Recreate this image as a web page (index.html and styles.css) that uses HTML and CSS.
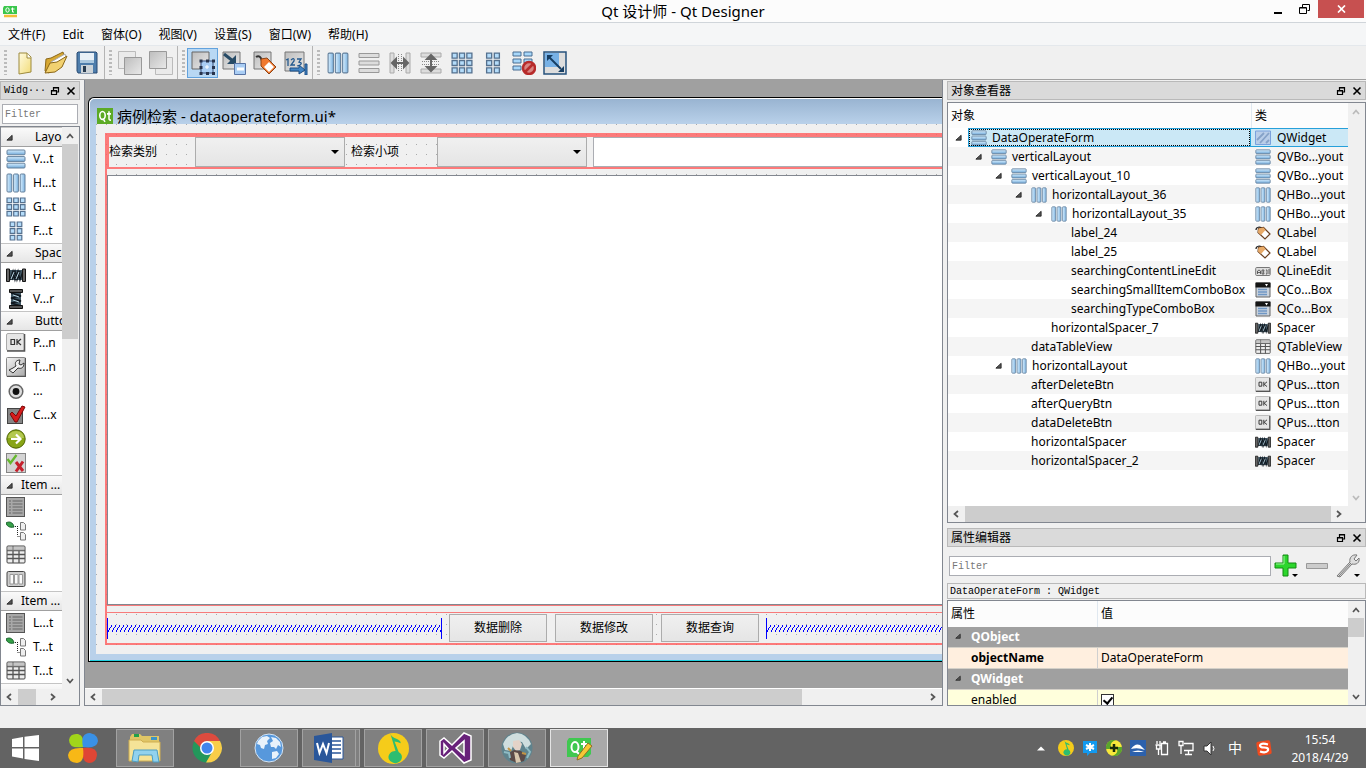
FILE: index.html
```html
<!DOCTYPE html>
<html lang="zh-CN">
<head>
<meta charset="utf-8">
<title>Qt 设计师 - Qt Designer</title>
<link rel="stylesheet" href="styles.css">
</head>
<body>
<svg class="defs" width="0" height="0" aria-hidden="true">
<defs>
<linearGradient id="gb" x1="0" y1="0" x2="0" y2="1"><stop offset="0" stop-color="#d8efff"/><stop offset="1" stop-color="#6fa8d8"/></linearGradient>
<linearGradient id="gh" x1="0" y1="0" x2="1" y2="0"><stop offset="0" stop-color="#d8efff"/><stop offset="1" stop-color="#7fb4e0"/></linearGradient>
<linearGradient id="gg" x1="0" y1="0" x2="1" y2="1"><stop offset="0" stop-color="#f4f4f4"/><stop offset="1" stop-color="#a8a8a8"/></linearGradient>
<linearGradient id="gd" x1="0" y1="0" x2="1" y2="1"><stop offset="0" stop-color="#bdbdbd"/><stop offset="1" stop-color="#e9e9e9"/></linearGradient>
<linearGradient id="gy" x1="0" y1="0" x2="1" y2="1"><stop offset="0" stop-color="#fffbe0"/><stop offset="1" stop-color="#f2dc78"/></linearGradient>
<symbol id="i-v" viewBox="0 0 20 20"><g fill="url(#gb)" stroke="#64809c"><rect x="1" y="1" width="18" height="4.800" rx="1"/><rect x="1" y="7.600" width="18" height="4.800" rx="1"/><rect x="1" y="14.200" width="18" height="4.800" rx="1"/></g></symbol>
<symbol id="i-h" viewBox="0 0 20 20"><g fill="url(#gh)" stroke="#64809c"><rect x="1" y="1" width="4.800" height="18" rx="1"/><rect x="7.600" y="1" width="4.800" height="18" rx="1"/><rect x="14.200" y="1" width="4.800" height="18" rx="1"/></g></symbol>
<symbol id="i-g" viewBox="0 0 20 20"><g fill="#b4dcfa" stroke="#55718f" stroke-width="1.200"><path d="M1 1h4.600v4.600h-4.600zM7.700 1h4.600v4.600h-4.600zM14.400 1h4.600v4.600h-4.600zM1 7.700h4.600v4.600h-4.600zM7.700 7.700h4.600v4.600h-4.600zM14.400 7.700h4.600v4.600h-4.600zM1 14.400h4.600v4.600h-4.600zM7.700 14.400h4.600v4.600h-4.600zM14.400 14.400h4.600v4.600h-4.600z"/></g></symbol>
<symbol id="i-f" viewBox="0 0 20 20"><path fill="#b4dcfa" stroke="#55718f" stroke-width="1.200" d="M4.200 1h4.600v4.600h-4.600zM11.200 1h4.600v4.600h-4.600zM4.200 7.700h4.600v4.600h-4.600zM11.200 7.700h4.600v4.600h-4.600zM4.200 14.400h4.600v4.600h-4.600zM11.200 14.400h4.600v4.600h-4.600z"/></symbol>
<symbol id="i-hs" viewBox="0 0 20 20"><path d="M4 5h12v10h-12z" fill="#3f5663"/><path d="M4 15l3-9 2 9 3-9 2 9 3-9M6 15l3-9 2 9 3-9" fill="none" stroke="#101820" stroke-width="1.300"/><path d="M5 14l3-7M10 14l3-7" stroke="#b7d4e2"/><path d="M.5 4h3v12.500h-3zM16.500 4h3v12.500h-3z" fill="#666" stroke="#151515"/></symbol>
<symbol id="i-vs" viewBox="0 0 20 20"><path d="M5 4h10v12h-10z" fill="#3f5663"/><path d="M5 4l10 3-10 2 10 3-10 2 10 3" fill="none" stroke="#101820" stroke-width="1.500"/><path d="M7 6l6 2M7 11l6 2" stroke="#b7d4e2"/><path d="M3.500 .5h13v3h-13zM3.500 16.500h13v3h-13z" fill="#555" stroke="#111"/></symbol>
<symbol id="i-ok" viewBox="0 0 20 20"><rect x=".5" y=".5" width="18" height="17" rx="1.500" fill="#e6e6e6" stroke="#aaa"/><path d="M1 18h17.500v-17" fill="none" stroke="#555" stroke-width="1.600"/><path d="M5 6.500h3.500v5h-3.500zM11 6v6M15 6l-3.500 3 3.500 3" fill="none" stroke="#333" stroke-width="1.200"/></symbol>
<symbol id="i-tool" viewBox="0 0 20 20"><rect x=".5" y=".5" width="19" height="19" rx="1" fill="url(#gg)" stroke="#888"/><path d="M1 19.500h18.500v-18.500" fill="none" stroke="#555" stroke-width="1.500"/><path d="M3 13l4-2 3-2c-2-4 1-6 4-6l-1 4 2 1 3-2c0 5-3 6-6 5l-5 5z" fill="#f0f0f0" stroke="#333"/></symbol>
<symbol id="i-radio" viewBox="0 0 20 20"><circle cx="10" cy="10.500" r="6.800" fill="#ddd" stroke="#666" stroke-width="1.500"/><circle cx="10" cy="10.500" r="3.400" fill="#111"/></symbol>
<symbol id="i-check" viewBox="0 0 20 20"><rect x="1.500" y="3.500" width="15" height="15" fill="#858585" stroke="#444"/><path d="M4 9l2-2 4 4 6-10 3 1-8 15-2 0z" fill="#d61c1c" stroke="#7b0808"/></symbol>
<symbol id="i-cmd" viewBox="0 0 20 20"><circle cx="10" cy="10" r="9.200" fill="#88a516" stroke="#4d6303"/><path d="M2 9a8 7 0 0 1 16 0z" fill="#b3c850"/><path d="M5 10h9M10 5.500l4.500 4.500-4.500 4.500" fill="none" stroke="#fff" stroke-width="2.200"/></symbol>
<symbol id="i-dlg" viewBox="0 0 20 20"><rect x=".5" y=".5" width="19" height="19" fill="#d4d4d4" stroke="#858585"/><path d="M1.500 6l3 4 6-8" fill="none" stroke="#65b82e" stroke-width="2.300"/><path d="M10 9l7 9M17 8.500l-7 10" stroke="#c51f2c" stroke-width="3"/></symbol>
<symbol id="i-list" viewBox="0 0 20 20"><rect x=".5" y=".5" width="18" height="19" fill="#a8a8a8" stroke="#555"/><path d="M3 4h2M3 7h2M3 10h2M3 13h2M3 16h2M6.500 4h10M6.500 7h10M6.500 10h10M6.500 13h10M6.500 16h10" stroke="#666"/></symbol>
<symbol id="i-tree" viewBox="0 0 20 20"><path d="M0 2c3-2 7-1 8 4-5 1-7-1-8-4z" fill="#36a148" stroke="#17602c"/><path d="M9 5.500h4M11.500 7v8M11.500 15.500h3" fill="none" stroke="#222" stroke-dasharray="1 1"/><path d="M14.500 1.500h3l2 2v5.500h-5zM14.500 11.500h3l2 2v5.500h-5z" fill="#eee" stroke="#777"/></symbol>
<symbol id="i-table" viewBox="0 0 20 20"><rect x="1" y="1" width="18" height="17" rx="1" fill="#eee" stroke="#444"/><path d="M1 5.500h18M1 9.500h18M1 13.500h18M7 1v17M13 5.500v12.500" stroke="#555" stroke-width="1.300"/><path d="M1.500 1.500h17v4h-17z" fill="#aaa" opacity=".6"/></symbol>
<symbol id="i-col" viewBox="0 0 20 20"><rect x="1" y="2.500" width="18" height="15" rx="1.500" fill="#ccc" stroke="#444"/><path d="M4 5.500h3.500v9.500h-3.500zM8.500 5.500h3.500v9.500h-3.500zM13 5.500h3.500v9.500h-3.500z" fill="#fafafa" stroke="#999"/></symbol>
<symbol id="i-label" viewBox="0 0 16 16"><path d="M1 5c0-3 4-4 7-1" fill="none" stroke="#222" stroke-width="1.200"/><path d="M3.500 3.500l5-1 6.500 6.500-5 5-7-6.500z" fill="#fff" stroke="#6b4020" stroke-width="1.200"/><path d="M3.500 3.500l5-1 2 2.500-4.500 5-3-2.500z" fill="#e8aa68"/></symbol>
<symbol id="i-line" viewBox="0 0 16 16"><rect x=".7" y="4.500" width="14.500" height="8" rx="1" fill="#ddd" stroke="#777"/><path d="M2.500 11v-3l1.500-1 1.500 1v3M2.500 9.500h3M7 7h2l-.5 2 .5 2h-2zM11 7h1v4h-1M14 6v5" fill="none" stroke="#444" stroke-width=".8"/></symbol>
<symbol id="i-combo" viewBox="0 0 16 16"><path d="M1 1h14v14h-14z" fill="#c9d2dc" stroke="#666"/><path d="M.5 .5h15v5h-15z" fill="#151515"/><path d="M10 2h3l-1.500 2.500z" fill="#fff"/><path d="M3 7.500h9M3 10h9M3 12.500h9" stroke="#6f97c5" stroke-width="1.700"/></symbol>
<symbol id="i-widget" viewBox="0 0 16 16"><path d="M.5 1h15v13.500h-15z" fill="#b9cde8" stroke="#7ba1dc"/><path d="M2 10l7-7M5 13l9-10M11 13l3-3" stroke="#86a2c8" stroke-width="1.800"/></symbol>
<symbol id="i-exp" viewBox="0 0 8 8"><path d="M1 7l6-5.500v5.500z" fill="#555" stroke="#222"/></symbol>
<symbol id="i-up" viewBox="0 0 8 8"><path d="M1 6l3-3.500 3 3.500" fill="none" stroke="currentColor" stroke-width="1.700"/></symbol>
<symbol id="i-dn" viewBox="0 0 8 8"><path d="M1 2l3 3.500 3-3.500" fill="none" stroke="currentColor" stroke-width="1.700"/></symbol>
<symbol id="i-lt" viewBox="0 0 8 8"><path d="M6 1l-3.500 3 3.500 3" fill="none" stroke="currentColor" stroke-width="1.700"/></symbol>
<symbol id="i-rt" viewBox="0 0 8 8"><path d="M2 1l3.500 3-3.500 3" fill="none" stroke="currentColor" stroke-width="1.700"/></symbol>
<symbol id="i-float" viewBox="0 0 10 10"><path d="M3.500 4v-2.500h5v4.500h-2M3 2h6M1.500 4.500h5v4h-5zM1 5h6" fill="none" stroke="#000" stroke-width="1.200"/></symbol>
<symbol id="i-x" viewBox="0 0 10 10"><path d="M1.500 1.500l7 7M8.500 1.500l-7 7" stroke="#000" stroke-width="1.600"/></symbol>
<symbol id="i-drop" viewBox="0 0 8 4"><path d="M0 0h8l-4 4z" fill="#000"/></symbol>
<symbol id="i-qt" viewBox="0 0 16 15" preserveAspectRatio="none"><path d="M0 0h16v15h-16z" fill="#5caa25"/><ellipse cx="5.500" cy="7" rx="2.700" ry="3.700" fill="none" stroke="#fff" stroke-width="1.600"/><path d="M6 10l2 3M12 3v7q0 1.500 2 1.300M10 5.500h4" fill="none" stroke="#fff" stroke-width="1.500"/></symbol>
<symbol id="i-music" viewBox="0 0 30 36" preserveAspectRatio="none"><ellipse cx="15" cy="18" rx="15" ry="18" fill="#f5cc1a"/><path d="M12 1c2 7 10 5 10 11-3-1-4-2-6-2l4 12a6.500 7 0 1 1-3-1z" fill="#2dbd70"/></symbol>
</defs>
</svg>

<header class="titlebar">
  <svg class="app-icon" viewBox="0 0 16 14"><path d="M2 1h13v8h-14v-6z" fill="#3ac64c"/><ellipse cx="5.500" cy="5" rx="1.700" ry="2.200" fill="none" stroke="#fff"/><path d="M10.500 2.500v4.500h1.500M9 4h3.500" fill="none" stroke="#fff"/><path d="M2 11h13" stroke="#f3bd38" stroke-width="2.500"/></svg>
  <h1 class="app-title">Qt 设计师 - Qt Designer</h1>
  <div class="win-controls">
    <button class="win-btn" aria-label="最小化"><svg width="10" height="12"><path d="M1 10h8" stroke="#000" stroke-width="2"/></svg></button>
    <button class="win-btn" aria-label="还原"><svg width="11" height="10"><path d="M3.500 3v-2.500h7v6h-2M.5 3.500h7v6h-7zM1 4h6" fill="none" stroke="#000"/></svg></button>
    <button class="win-btn close" aria-label="关闭"><svg width="9" height="8"><path d="M1 .5l7 7M8 .5l-7 7" stroke="#fff" stroke-width="1.700"/></svg></button>
  </div>
</header>

<nav class="menubar"><button>文件(F)</button><button>Edit</button><button>窗体(O)</button><button>视图(V)</button><button>设置(S)</button><button>窗口(W)</button><button>帮助(H)</button></nav>

<div class="toolbar">
  <div class="tool-group">
    <button aria-label="新建"><svg viewBox="0 0 24 24"><path d="M6 2h8l4 4v15l-12 2z" fill="url(#gy)" stroke="#9d8a3d"/><path d="M14 2v5h4" fill="#fff" stroke="#9d8a3d"/></svg></button>
    <button aria-label="打开"><svg viewBox="0 0 24 24"><path d="M1 20l1-12 5-1 2-1 10-5 1 4-2 5-13 12z" fill="#d7a833" stroke="#8b6718"/><path d="M7 11l14-8 1 4-5 9-9 4z" fill="#fff" stroke="#aaa"/><path d="M1 22l5-10 7-1 10-6-5 11-7 5z" fill="#f2d170" stroke="#8b6718"/></svg></button>
    <button aria-label="保存"><svg viewBox="0 0 24 24"><path d="M3 1h18l1 1v20h-19l-1-2v-18z" fill="#4e7dab" stroke="#284b73"/><path d="M5 2h14v10h-14z" fill="#e8f0f7"/><path d="M5 9h14v3h-14z" fill="#abc8df"/><path d="M6 14h12v8h-12z" fill="#ccd3d8"/><path d="M8 15h3v6h-3z" fill="#273b50"/></svg></button>
  </div>
  <div class="tool-group">
    <button aria-label="置后"><svg viewBox="0 0 24 24"><path d="M.5 .5h17v17h-17z" fill="#eaeaea" stroke="#bbb"/><path d="M6.500 6.500h17v17h-17z" fill="url(#gd)" stroke="#999"/></svg></button>
    <button aria-label="置前"><svg viewBox="0 0 24 24"><path d="M6.500 6.500h17v17h-17z" fill="#eaeaea" stroke="#bbb"/><path d="M.5 .5h17v17h-17z" fill="url(#gd)" stroke="#999"/></svg></button>
  </div>
  <div class="tool-group">
    <button class="on" aria-label="编辑窗口部件"><svg viewBox="0 0 24 24"><path d="M1 1h17v17h-17z" fill="url(#gd)" stroke="#666"/><path d="M10 10h12v12h-12z" fill="#a9cdf4" stroke="#354c79"/><path d="M8.500 8.500h3v3h-3zM15 8.500h3v3h-3zM21 8.500h3v3h-3zM8.500 15h3v3h-3zM21 15h3v3h-3zM8.500 21h3v3h-3zM15 21h3v3h-3zM21 21h3v3h-3z" fill="#27334c"/><path d="M14 16h4M16 14v4" stroke="#fff"/></svg></button>
    <button aria-label="编辑信号/槽"><svg viewBox="0 0 24 24"><path d="M1 1h17v17h-17z" fill="url(#gd)" stroke="#777"/><path d="M2 3l9 7" stroke="#274b66" stroke-width="3"/><path d="M14 4v9h-9z" fill="#274b66"/><path d="M12.500 12.500h11v11h-11z" fill="#a9cdf4" stroke="#5874a5"/><path d="M15 18h7" stroke="#fff" stroke-width="3"/></svg></button>
    <button aria-label="编辑伙伴"><svg viewBox="0 0 24 24"><path d="M1 1h17v17h-17z" fill="url(#gd)" stroke="#777"/><path d="M3 6c3-2 5 0 6 4" fill="none" stroke="#333" stroke-width="2"/><path d="M8 8l6-1 9 9-7 7-8-8z" fill="#ef7930" stroke="#8c4416"/><path d="M16 11l5 5-5 5-5-5z" fill="#fff"/></svg></button>
    <button aria-label="编辑Tab顺序"><svg viewBox="0 0 24 24"><path d="M1 1h19v19h-19z" fill="url(#gd)" stroke="#777"/><path d="M2 9l2-1v7M7 9q4-3 3 1l-3 4h4M13 8h4l-2 3q4 1 1 3l-3 1" fill="none" stroke="#24598e" stroke-width="1.300"/><path d="M6 17h9v-3l6 5-6 4v-3h-9zM21 13h2v11h-2z" fill="#4385c4" stroke="#1c4f86"/></svg></button>
  </div>
  <div class="tool-group">
    <button aria-label="水平布局"><svg class="s22"><use href="#i-h"/></svg></button>
    <button aria-label="垂直布局"><svg viewBox="0 0 24 24"><path d="M2 2.500h20v4h-20zM2 10h20v4h-20zM2 17.500h20v4h-20z" fill="#ddd" stroke="#999"/></svg></button>
    <button aria-label="水平分裂"><svg viewBox="0 0 24 24"><path d="M2 2h4v20h-4zM18 2h4v20h-4z" fill="#ddd" stroke="#aaa"/><path d="M10.500 3v18M13.500 3v18" stroke="#888" stroke-dasharray="1 1"/><path d="M6 12h12M4 12l4-4v8zM20 12l-4-4v8z" fill="#666" stroke="#666" stroke-width="2"/></svg></button>
    <button aria-label="垂直分裂"><svg viewBox="0 0 24 24"><path d="M2 2h20v4h-20zM2 18h20v4h-20z" fill="#ddd" stroke="#aaa"/><path d="M3 10.500h18M3 13.500h18" stroke="#888" stroke-dasharray="1 1"/><path d="M12 6v12M12 4l4 4h-8zM12 20l4-4h-8z" fill="#666" stroke="#666" stroke-width="2"/></svg></button>
    <button aria-label="栅格布局"><svg class="s22"><use href="#i-g"/></svg></button>
    <button aria-label="表单布局"><svg class="s22"><use href="#i-f"/></svg></button>
    <button aria-label="打破布局"><svg viewBox="0 0 24 24"><path d="M1 1h8v4h-8zM12 1h8v4h-8zM1 8h8v4h-8zM12 8h8v4h-8zM1 15h8v4h-8z" fill="#a7d7fa" stroke="#496d91"/><circle cx="17" cy="17" r="6" fill="#d98583" stroke="#b72b2b" stroke-width="2.500"/><path d="M13 21l8-8" stroke="#b72b2b" stroke-width="2.500"/></svg></button>
    <button aria-label="调整大小"><svg viewBox="0 0 24 24"><path d="M1 1h22v22h-22z" fill="#ddd" stroke="#26517c" stroke-width="1.500"/><path d="M2 2h14v14h-14z" fill="#77b1e6"/><path d="M6 6l12 12" stroke="#173e63" stroke-width="2"/><path d="M4 4h6l-6 6zM21 21h-6l6-6z" fill="#173e63"/></svg></button>
  </div>
</div>

<main class="workspace">
  <aside class="dock dock-left">
    <div class="dock-title mono"><span>Widg···</span><button aria-label="浮动"><svg><use href="#i-float"/></svg></button><button aria-label="关闭"><svg><use href="#i-x"/></svg></button></div>
    <input class="filter mono" type="text" placeholder="Filter" aria-label="Widget filter">
    <div class="frame palette">
      <div class="palette-list">
        <h2 class="far"><svg><use href="#i-exp"/></svg>Layouts</h2>
        <ul><li><svg><use href="#i-v"/></svg>V...t</li><li><svg><use href="#i-h"/></svg>H...t</li><li><svg><use href="#i-g"/></svg>G...t</li><li><svg><use href="#i-f"/></svg>F...t</li></ul>
        <h2 class="far"><svg><use href="#i-exp"/></svg>Spacers</h2>
        <ul><li><svg><use href="#i-hs"/></svg>H...r</li><li><svg><use href="#i-vs"/></svg>V...r</li></ul>
        <h2 class="far"><svg><use href="#i-exp"/></svg>Buttons</h2>
        <ul><li><svg><use href="#i-ok"/></svg>P...n</li><li><svg><use href="#i-tool"/></svg>T...n</li><li><svg><use href="#i-radio"/></svg>...</li><li><svg><use href="#i-check"/></svg>C...x</li><li><svg><use href="#i-cmd"/></svg>...</li><li><svg><use href="#i-dlg"/></svg>...</li></ul>
        <h2><svg><use href="#i-exp"/></svg>Item ...</h2>
        <ul><li><svg><use href="#i-list"/></svg>...</li><li><svg><use href="#i-tree"/></svg>...</li><li><svg><use href="#i-table"/></svg>...</li><li><svg><use href="#i-col"/></svg>...</li></ul>
        <h2><svg><use href="#i-exp"/></svg>Item ...</h2>
        <ul><li><svg><use href="#i-list"/></svg>L...t</li><li><svg><use href="#i-tree"/></svg>T...t</li><li><svg><use href="#i-table"/></svg>T...t</li></ul>
        <h2></h2>
      </div>
      <div class="vbar"><svg><use href="#i-up"/></svg><div class="track"><div class="thumb tall"></div></div><svg><use href="#i-dn"/></svg></div>
      <div class="hbar"><svg><use href="#i-lt"/></svg><div class="track"><div class="thumb half"></div></div><svg><use href="#i-rt"/></svg></div>
    </div>
  </aside>

  <section class="mdi">
    <div class="subwindow">
      <div class="sub-title"><svg><use href="#i-qt"/></svg><span>病例检索 - dataoperateform.ui*</span></div>
      <form class="form">
        <div class="outer-layout">
          <div class="search-row">
            <label for="kind">检索类别</label>
            <div class="combo"><select id="kind"></select><svg><use href="#i-drop"/></svg></div>
            <label for="item">检索小项</label>
            <div class="combo"><select id="item"></select><svg><use href="#i-drop"/></svg></div>
            <input class="search-text" type="text" aria-label="检索内容">
          </div>
          <div class="table-view"></div>
          <div class="gap-row"></div>
          <div class="button-row">
            <div class="spring"><svg><defs><pattern id="zig" width="4" height="7" patternUnits="userSpaceOnUse"><path d="M3 0h1v2h-1zM2 2h1v1h-1zM1 3h1v2h-1zM0 5h1v2h-1z" fill="#00f"/></pattern></defs><rect width="100%" height="7" fill="url(#zig)"/></svg></div>
            <button type="button">数据删除</button><button type="button">数据修改</button><button type="button">数据查询</button>
            <div class="spring last"><svg><rect width="100%" height="7" fill="url(#zig)"/></svg></div>
          </div>
        </div>
      </form>
    </div>
    <div class="hbar"><svg><use href="#i-lt"/></svg><div class="track"><div class="thumb wide"></div></div><svg><use href="#i-rt"/></svg></div>
  </section>

  <aside class="dock dock-right">
    <section class="inspector">
      <div class="dock-title"><span>对象查看器</span><button aria-label="浮动"><svg><use href="#i-float"/></svg></button><button aria-label="关闭"><svg><use href="#i-x"/></svg></button></div>
      <div class="frame">
        <div class="scroll">
        <table class="objects">
          <colgroup><col><col class="class-col"></colgroup>
          <thead><tr><th>对象</th><th>类</th></tr></thead>
          <tbody>
            <tr class="selected"><td><div class="node l0"><svg class="exp"><use href="#i-exp"/></svg><span class="focus"><svg><use href="#i-v"/></svg>DataOperateForm</span></div></td><td><div class="cls"><svg><use href="#i-widget"/></svg>QWidget</div></td></tr>
            <tr><td><div class="node l1"><svg class="exp"><use href="#i-exp"/></svg><svg><use href="#i-v"/></svg>verticalLayout</div></td><td><div class="cls"><svg><use href="#i-v"/></svg>QVBo...yout</div></td></tr>
            <tr><td><div class="node l2"><svg class="exp"><use href="#i-exp"/></svg><svg><use href="#i-v"/></svg>verticalLayout_10</div></td><td><div class="cls"><svg><use href="#i-v"/></svg>QVBo...yout</div></td></tr>
            <tr><td><div class="node l3"><svg class="exp"><use href="#i-exp"/></svg><svg><use href="#i-h"/></svg>horizontalLayout_36</div></td><td><div class="cls"><svg><use href="#i-h"/></svg>QHBo...yout</div></td></tr>
            <tr><td><div class="node l4"><svg class="exp"><use href="#i-exp"/></svg><svg><use href="#i-h"/></svg>horizontalLayout_35</div></td><td><div class="cls"><svg><use href="#i-h"/></svg>QHBo...yout</div></td></tr>
            <tr><td><div class="node leaf l5">label_24</div></td><td><div class="cls"><svg><use href="#i-label"/></svg>QLabel</div></td></tr>
            <tr><td><div class="node leaf l5">label_25</div></td><td><div class="cls"><svg><use href="#i-label"/></svg>QLabel</div></td></tr>
            <tr><td><div class="node leaf l5">searchingContentLineEdit</div></td><td><div class="cls"><svg><use href="#i-line"/></svg>QLineEdit</div></td></tr>
            <tr><td><div class="node leaf l5">searchingSmallItemComboBox</div></td><td><div class="cls"><svg><use href="#i-combo"/></svg>QCo...Box</div></td></tr>
            <tr><td><div class="node leaf l5">searchingTypeComboBox</div></td><td><div class="cls"><svg><use href="#i-combo"/></svg>QCo...Box</div></td></tr>
            <tr><td><div class="node leaf l4">horizontalSpacer_7</div></td><td><div class="cls"><svg><use href="#i-hs"/></svg>Spacer</div></td></tr>
            <tr><td><div class="node leaf l3">dataTableView</div></td><td><div class="cls"><svg><use href="#i-table"/></svg>QTableView</div></td></tr>
            <tr><td><div class="node l2"><svg class="exp"><use href="#i-exp"/></svg><svg><use href="#i-h"/></svg>horizontalLayout</div></td><td><div class="cls"><svg><use href="#i-h"/></svg>QHBo...yout</div></td></tr>
            <tr><td><div class="node leaf l3">afterDeleteBtn</div></td><td><div class="cls"><svg><use href="#i-ok"/></svg>QPus...tton</div></td></tr>
            <tr><td><div class="node leaf l3">afterQueryBtn</div></td><td><div class="cls"><svg><use href="#i-ok"/></svg>QPus...tton</div></td></tr>
            <tr><td><div class="node leaf l3">dataDeleteBtn</div></td><td><div class="cls"><svg><use href="#i-ok"/></svg>QPus...tton</div></td></tr>
            <tr><td><div class="node leaf l3">horizontalSpacer</div></td><td><div class="cls"><svg><use href="#i-hs"/></svg>Spacer</div></td></tr>
            <tr><td><div class="node leaf l3">horizontalSpacer_2</div></td><td><div class="cls"><svg><use href="#i-hs"/></svg>Spacer</div></td></tr>
          </tbody>
        </table>
        </div>
        <div class="vbar idle"><svg><use href="#i-up"/></svg><div class="track"></div><svg><use href="#i-dn"/></svg></div>
        <div class="hbar"><svg><use href="#i-lt"/></svg><div class="track"><div class="thumb full"></div></div><svg><use href="#i-rt"/></svg></div>
      </div>
    </section>

    <section class="properties">
      <div class="dock-title"><span>属性编辑器</span><button aria-label="浮动"><svg><use href="#i-float"/></svg></button><button aria-label="关闭"><svg><use href="#i-x"/></svg></button></div>
      <div class="prop-tools">
        <input class="filter mono" type="text" placeholder="Filter" aria-label="Property filter">
        <button aria-label="添加"><svg viewBox="0 0 24 24"><path d="M9 1h5v8h8v5h-8v8h-5v-8h-8v-5h8z" fill="#2cd62c" stroke="#128a12"/><path d="M10 2v8h-8" fill="none" stroke="#9cf29c"/><path d="M18 20h6l-3 3z" fill="#000"/></svg></button>
        <button aria-label="删除"><svg viewBox="0 0 24 24"><path d="M1.500 9.500h21v5h-21z" fill="#ccc" stroke="#999"/></svg></button>
        <button aria-label="配置"><svg viewBox="0 0 24 24"><path d="M1 22l13-14c-1-4 2-8 7-7l-3 4 2 2 3-3c1 5-3 7-7 6l-12 13z" fill="#ddd" stroke="#777"/><path d="M3 22l12-13" stroke="#777"/><path d="M18 20h6l-3 3z" fill="#000"/></svg></button>
      </div>
      <div class="object-name mono">DataOperateForm : QWidget</div>
      <div class="frame">
        <div class="scroll">
        <table class="props">
          <colgroup><col class="name-col"><col></colgroup>
          <thead><tr><th>属性</th><th>值</th></tr></thead>
          <tbody>
            <tr class="group"><td colspan="2"><svg><use href="#i-exp"/></svg>QObject</td></tr>
            <tr class="peach"><td>objectName</td><td>DataOperateForm</td></tr>
            <tr class="group"><td colspan="2"><svg><use href="#i-exp"/></svg>QWidget</td></tr>
            <tr class="yellow"><td><label for="enabled">enabled</label></td><td><input id="enabled" type="checkbox" checked></td></tr>
          </tbody>
        </table>
        </div>
        <div class="vbar"><svg><use href="#i-up"/></svg><div class="track"><div class="thumb short"></div></div><svg><use href="#i-dn"/></svg></div>
      </div>
    </section>
  </aside>
</main>

<footer class="taskbar">
  <button class="task plain start" aria-label="开始"><svg width="27" height="26" viewBox="0 0 27 26"><path d="M0 4l11-2v10h-11zM12.500 1.700l14.500-1.700v12h-14.500zM0 13.500h11v10l-11-2zM12.500 13.500h14.500v12.500l-14.500-2z" fill="#fff"/></svg></button>
  <button class="task plain" aria-label="应用"><svg width="30" height="30" viewBox="0 0 30 30"><path d="M15 14q-14 2-14-7 1-7 9-6 7 2 5 13z" fill="#a1d51a"/><path d="M15 14q-3-14 7-14 8 2 8 8-1 8-15 6z" fill="#3a91e6"/><path d="M15 15q14-2 14 7-1 8-8 8-8-1-6-15z" fill="#df4635"/><path d="M15 15q2 14-6 15-9-1-9-8 1-8 15-7z" fill="#f8b816"/></svg></button>
  <button class="task" aria-label="文件资源管理器"><svg width="34" height="30" viewBox="0 0 34 30"><path d="M2 4l2-3h8l2 2h17v25h-29z" fill="#dfc566"/><path d="M6 1h5v3h-5z" fill="#22a04a"/><path d="M23 4h6v3h-6z" fill="#3b94c8"/><path d="M1 7h12l2 2h17v19h-31z" fill="#f5e397" stroke="#cfae50"/><path d="M4 28l2-11h23l2 12h-6l-1-7h-13l-1 7z" fill="#91d2ee" stroke="#4c9dc2"/></svg></button>
  <button class="task plain" aria-label="Chrome"><svg width="30" height="30" viewBox="0 0 30 30"><circle cx="15" cy="15" r="14.500" fill="#23975b"/><path d="M2 8a14.500 14.500 0 0 1 26 0h-13l-5 8z" fill="#dd4b3e"/><path d="M15 8h13a14.500 14.500 0 0 1-14 21.500l7-12z" fill="#f9cd48"/><circle cx="15" cy="15" r="7" fill="#fff"/><circle cx="15" cy="15" r="5.500" fill="#4285ed"/></svg></button>
  <button class="task" aria-label="浏览器"><svg width="30" height="30" viewBox="0 0 30 30"><circle cx="15" cy="15" r="14" fill="#5798dc" stroke="#d5e5f4"/><path d="M4 8l4-4 5-1 3 2-3 3 1 3-3 1-1 4-3-1-1-3-3-1zM17 4l5 1 4 4 1 5-3-2-2 4-2-2-3 0-1-4 3-2zM18 19l5-1 2 3-3 4-4 1z" fill="#e8f2fb"/></svg></button>
  <button class="task stacked" aria-label="Word"><svg width="30" height="30" viewBox="0 0 30 30"><path d="M16 4h13v22h-13z" fill="#fff" stroke="#2a579a"/><path d="M18 8h9M18 12h9M18 16h9M18 20h9" stroke="#2a579a" stroke-width="1.500"/><path d="M0 3l18-3v30l-18-3z" fill="#2a579a"/><path d="M3 10l2.500 10 3.500-9 3.500 9 2.500-10" fill="none" stroke="#fff" stroke-width="2"/></svg></button>
  <button class="task" aria-label="QQ音乐"><svg width="31" height="31"><use href="#i-music"/></svg></button>
  <button class="task" aria-label="Visual Studio"><svg width="33" height="32" viewBox="0 0 33 32"><path d="M1 9l4-3 8 7 12-12 7 3v24l-7 3-12-12-8 7-4-3zM5 12v9l4-4.500zM17 16l8 7v-14z" fill="#68217a" stroke="#fff" stroke-width="1.500" fill-rule="evenodd"/></svg></button>
  <button class="task" aria-label="游戏"><svg width="32" height="32" viewBox="0 0 32 32"><circle cx="16" cy="16" r="15.500" fill="#5f838d"/><path d="M2 12q4-10 14-11 10 1 14 11l-5 5-4-7-7-1-4 10-6-1z" fill="#cfdede"/><path d="M12 9l6-1 3 4-2 6-4 1-3-4z" fill="#e4d3c8"/><path d="M8 21l5-3 7 1 5 4-2 6-7 2-7-3z" fill="#5b4a48"/><path d="M13 20l4 1 3 9-5 1z" fill="#d8c7ae"/><path d="M3 20l5 1 1 5M25 15l4 5-3 6" fill="none" stroke="#8ebbc4" stroke-width="2"/><path d="M7 16l3 3M21 21l4 1" stroke="#c39545" stroke-width="2"/></svg></button>
  <button class="task active" aria-label="Qt Designer"><svg width="28" height="26" viewBox="0 0 28 26"><path d="M4 3h22v16l-3 3h-21v-16z" fill="#40c850"/><ellipse cx="10" cy="12" rx="3.500" ry="5" fill="none" stroke="#fff" stroke-width="2"/><path d="M11 16l3 3M19 6v9q0 2 3 2M16 9h6" fill="none" stroke="#fff" stroke-width="2"/><path d="M13 21l10-13 4 3-10 12-5 2z" fill="#f7c736" stroke="#8f6e26"/></svg></button>
  <div class="tray">
    <svg viewBox="0 0 10 6"><path d="M0 5.500l5-5 5 5z" fill="#fff"/></svg>
    <svg><use href="#i-music"/></svg>
    <svg viewBox="0 0 16 16"><path d="M1 1h14v12h-7l-3 3v-3h-4z" fill="#139aef"/><path d="M8 3v8M4 5l8 4M12 5l-8 4" stroke="#fff" stroke-width="2"/></svg>
    <svg viewBox="0 0 16 16"><circle cx="8" cy="8" r="8" fill="#f7e83a"/><path d="M0 9a8 8 0 0 1 10-9q-8 3-4 9zM16 7a8 8 0 0 1-10 9q8-3 4-9z" fill="#5aa52c"/><path d="M8 4v8M4 8h8" stroke="#182b0c" stroke-width="2.500"/></svg>
    <svg viewBox="0 0 16 16"><path d="M0 0h16v16h-16z" fill="#2c61ac"/><path d="M1 9q4-6 9-4l5 5q-7-3-14-1zM2 12q6-3 12 0z" fill="#fff"/></svg>
    <svg viewBox="0 0 16 16"><path d="M7.500 3.500h6v11h-6zM9 2h3M3 1v3M6 1v3M1.500 5h5.500M2.500 5v4h3.500v-4M4.500 9v6" fill="none" stroke="#fff" stroke-width="1.300"/></svg>
    <svg viewBox="0 0 16 16"><path d="M6 3.500h9v7h-9M10.500 11v3M7 14.500h7M1 1.500h4v4h-4zM3 6v8" fill="none" stroke="#fff" stroke-width="1.300"/></svg>
    <svg viewBox="0 0 16 16"><path d="M2 6h3l4-4v13l-4-4h-3z" fill="#fff" stroke="#333"/><path d="M11 6q2 3 0 5" fill="none" stroke="#fff"/></svg>
    <span class="ime">中</span>
    <svg viewBox="0 0 16 16"><rect x="1" y="1" width="14" height="14" rx="2" fill="#f04a1d" transform="rotate(-8 8 8)"/><path d="M12 4.500q-7-2-8 1 0 2 4 2 5 0 4 3-2 3-8 1" fill="none" stroke="#fff" stroke-width="2.200"/></svg>
  </div>
  <div class="clock"><span>15:54</span><span>2018/4/29</span></div>
</footer>
</body>
</html>
```
FILE: styles.css
```css
* { box-sizing: border-box; }
html, body { height: 100%; }
body {
  margin: 0;
  display: flex;
  flex-direction: column;
  overflow: hidden;
  background: #f0f0f0;
  color: #000;
  font: 12px/18px "Noto Sans", "Noto Sans CJK SC", sans-serif;
}
button, input, select { font: inherit; color: inherit; margin: 0; padding: 0; border-radius: 0; }
button { background: none; border: 0; display: flex; align-items: center; justify-content: center; }
svg { flex: none; display: block; }
h1, h2, ul { margin: 0; padding: 0; font-weight: normal; list-style: none; }
.defs { position: absolute; }
.mono { font-family: "Liberation Mono", "Noto Sans CJK SC", monospace; font-size: 10px; }

/* Title and menus */
.titlebar { display: grid; grid-template-columns: 120px 1fr 120px; height: 23px; flex: none; background: #fcfcfc; border-bottom: 1px solid #d0d5da; }
.app-icon { width: 16px; height: 14px; margin: 5px 0 0 2px; }
.app-title { text-align: center; font-size: 15px; line-height: 23px; white-space: nowrap; }
.win-controls { display: flex; justify-content: flex-end; align-items: flex-start; padding-right: 2px; }
.win-btn { width: 27px; height: 18px; }
.win-btn.close { width: 46px; background: #c75050; }
.menubar { display: flex; gap: 17px; height: 23px; flex: none; padding: 1px 0 0 8px; background: #f5f6f7; border-bottom: 1px solid #e4e8ec; }
.menubar button { white-space: nowrap; }
.toolbar { display: flex; height: 34px; flex: none; border-bottom: 1px solid #a0a0a0; }
.tool-group { display: flex; align-items: center; padding-right: 1px; border-right: 1px solid #b4b4b4; }
.tool-group:last-child { border: 0; }
.tool-group::before { content: ""; width: 3px; height: 25px; margin: 0 2px 0 4px; background: repeating-linear-gradient(#bbb 0 2px, transparent 2px 4px); }
.tool-group + .tool-group { padding-left: 1px; }
.tool-group + .tool-group::before { margin-left: 3px; }
.tool-group:first-child { padding-right: 2px; }
.tool-group button { width: 31px; height: 30px; }
.tool-group svg { width: 24px; height: 24px; }
.tool-group svg.s22 { width: 22px; height: 22px; }
.tool-group .on { background: #b8d8f4; border: 1px solid #62a2dd; }

/* Docks */
.workspace { flex: 1; min-height: 0; display: flex; gap: 4px; margin-bottom: 22px; }
.dock { display: flex; flex-direction: column; flex: none; min-height: 0; padding-top: 1px; }
.dock-left { width: 80px; }
.dock-right { width: 419px; gap: 5px; }
.dock-title { display: flex; align-items: center; height: 19px; flex: none; padding-left: 3px; background: #dadada; border: 1px solid #b9b9b9; line-height: 17px; }
.dock-title span { flex: 1; white-space: nowrap; }
.dock-title button { width: 16px; }
.dock-title svg { width: 10px; height: 10px; }
.filter { height: 20px; border: 1px solid #abadb3; background: #fff; padding: 0 2px; min-width: 0; }
.filter::placeholder { color: #777; opacity: 1; }
.dock-left .filter { margin: 4px 2px 2px; }
.frame { flex: 1; min-height: 0; display: grid; grid-template-columns: minmax(0, 1fr) 17px; grid-template-rows: minmax(0, 1fr) auto; border: 1px solid #828790; background: #fff; }
.vbar { display: flex; flex-direction: column; padding: 0 1px 0 0; background: #f0f0f0; color: #555; }
.vbar > svg { width: 8px; height: 8px; margin: 5px 4px 4px; }
.vbar.idle { color: #bbb; }
.hbar { display: flex; height: 16px; background: #f0f0f0; color: #555; }
.hbar > svg { width: 8px; height: 8px; margin: 4px 5px 4px 4px; }
.frame .hbar { grid-column: 1; }
.frame:has(.hbar) { background: #f0f0f0; }
.track { flex: 1; min-width: 0; }
.thumb { background: #cdcdcd; height: 16px; }
.thumb.tall { height: 37%; }
.thumb.wide { width: 85%; }
.thumb.full { width: 100%; }
.thumb.short { height: 19px; }

/* Widget palette */
.palette-list { overflow: hidden; background: #fff; }
.palette-list h2 { display: flex; align-items: center; gap: 8px; height: 20px; padding-left: 5px; font-size: 12px; white-space: nowrap; background: linear-gradient(#fafafa, #e6e6e6); border-top: 1px solid #c4c4c4; border-bottom: 1px solid #a0a0a0; }
.palette-list h2.far { gap: 22px; }
.palette-list h2 svg { width: 7px; height: 7px; }
.palette-list li { display: flex; align-items: center; gap: 7px; height: 24px; padding-left: 5px; white-space: nowrap; }
.palette-list li svg { width: 20px; height: 20px; }
.palette .thumb.half { width: 18px; }

/* Form canvas */
.mdi { flex: 1; min-width: 0; display: flex; flex-direction: column; overflow: hidden; background: #a0a0a0; border: solid #828790; border-width: 0 1px 1px; }
.subwindow { flex: 1; min-height: 0; display: flex; flex-direction: column; margin: 17px 0 26px 3px; padding: 0 0 7px 7px; background: #b9d1ea; border: 1px solid #000; border-right: 0; border-top-left-radius: 6px; box-shadow: inset 1px 1px #fff, inset 0 -1px #1fd0e0; }
.sub-title { display: flex; align-items: center; gap: 4px; height: 25px; flex: none; margin: 1px 0 0 -6px; padding: 10px 0 0 7px; border-top-left-radius: 5px; font-size: 15px; line-height: 15px; background: linear-gradient(#99b4d1, #b9d1ea); }
.sub-title svg { width: 16px; height: 16px; margin-bottom: 2px; }
.form { flex: 1; min-height: 0; display: flex; padding: 9px 0 9px 9px; background: conic-gradient(from 270deg at 1px 1px, #aaa 90deg, transparent 0) 0 0 / 10px 10px, #f0f0f0; }
.outer-layout { flex: 1; min-width: 0; display: flex; flex-direction: column; border: 2px solid rgba(255, 92, 92, .8); border-right: 0; }
.search-row { display: flex; gap: 6px; height: 34px; flex: none; border: 2px solid rgba(255, 92, 92, .8); border-right: 0; margin-bottom: 6px; }
.search-row label { width: 80px; line-height: 30px; }
.combo { position: relative; width: 150px; }
.combo select { appearance: none; width: 100%; height: 100%; border: 1px solid #acacac; background: linear-gradient(#f0f0f0, #e5e5e5); }
.combo svg { position: absolute; right: 6px; top: 13px; width: 8px; height: 4px; pointer-events: none; }
.search-text { flex: 1; min-width: 0; border: 1px solid #abadb3; border-right: 0; background: #fff; }
.table-view { flex: 1; background: #fff; border: 1px solid #828790; border-right: 0; }
.gap-row { height: 8px; flex: none; background: #f0f0f0; border: solid #f77a7a; border-width: 1px 0; }
.button-row { display: flex; align-items: center; gap: 8px; height: 30px; flex: none; }
.button-row button { width: 98px; height: 28px; flex: none; border: 1px solid #acacac; background: linear-gradient(#f0f0f0, #e5e5e5); }
.spring { flex: 4 1 160px; min-width: 0; height: 21px; display: flex; align-items: center; border: solid #00f; border-width: 0 1px; margin-right: -1px; }
.spring.last { flex-basis: 1px; border-right: 0; margin: 0 0 0 -1px; }
.spring svg { width: 100%; height: 7px; flex: 1; }
.mdi .hbar { height: 17px; border-top: 1px solid #fff; flex: none; }

/* Object inspector */
.inspector { flex: 442; min-height: 0; display: flex; flex-direction: column; gap: 2px; }
.scroll { overflow: hidden; background: #fff; min-width: 0; }
table { width: 100%; border-collapse: separate; border-spacing: 0; table-layout: fixed; }
th, td { padding: 0; text-align: left; font-weight: normal; white-space: nowrap; overflow: hidden; }
th { height: 25px; padding-left: 3px; background: #fcfcfc; }
th + th { border-left: 1px solid #e0e8f0; }
.class-col { width: 97px; }
.objects td { height: 19px; line-height: 19px; }
.objects tbody tr:nth-child(even) { background: #f5f5f5; }
.node, .cls { display: flex; align-items: center; height: 19px; }
.node svg, .cls svg { width: 16px; height: 16px; margin-right: 5px; }
.node svg.exp { width: 7px; height: 7px; margin-right: 9px; }
.cls { padding-left: 4px; }
.cls svg { margin-right: 6px; }
.l0 { padding-left: 7px; }
.l1 { padding-left: 27px; }
.l2 { padding-left: 47px; }
.l3 { padding-left: 67px; }
.l4 { padding-left: 87px; }
.leaf.l3 { padding-left: 83px; }
.leaf.l4 { padding-left: 103px; }
.leaf.l5 { padding-left: 123px; }
.node.l0 .exp { margin-right: 6px; }
.focus { flex: 1; display: flex; align-items: center; height: 19px; padding-left: 2px; background: #cbe8f6; border: 1px solid #26a0da; outline: 1px dotted #000; outline-offset: -2px; }
.selected td:last-child .cls { background: #cbe8f6; border: solid #26a0da; border-width: 1px 0; }

/* Property editor */
.properties { flex: 178; min-height: 0; display: flex; flex-direction: column; }
.prop-tools { display: flex; align-items: center; height: 36px; flex: none; padding: 2px 6px 0 2px; gap: 7px; }
.prop-tools .filter { flex: 1; margin-right: -4px; }
.prop-tools button { width: 24px; height: 24px; }
.prop-tools svg { width: 24px; height: 24px; }
.object-name { height: 16px; flex: none; margin-bottom: 1px; padding-left: 2px; line-height: 15px; border: 1px solid #b9b9b9; }
.name-col { width: 149px; }
.props th { height: 26px; }
.props td { height: 21px; border-bottom: 1px solid #d4d0c8; padding-left: 23px; }
.props td + td { border-left: 1px solid #d0d0d0; padding-left: 3px; }
.props tr.group td { background: #a0a0a0; color: #fff; font-weight: bold; padding-left: 7px; }
.props .group svg { display: inline-block; width: 6px; height: 6px; margin: 0 10px 4px 0; vertical-align: middle; }
.peach { background: #ffefdf; }
.peach td:first-child { font-weight: bold; }
.yellow { background: #ffffdc; }
.yellow input { appearance: none; display: block; width: 13px; height: 13px; border: 1px solid #333; background: #fff; }
.yellow input:checked::after { content: ""; display: block; width: 4px; height: 7px; margin: 0 0 0 3px; border: solid #000; border-width: 0 2px 2px 0; transform: rotate(40deg); }

/* Taskbar */
.taskbar { display: flex; height: 40px; flex: none; gap: 4px; padding: 1px 0 1px; background: #636363; }
.task { width: 58px; border: 1px solid #a2a2a2; background: #808080; }
.task.plain { background: none; border: 0; }
.task.start { width: 50px; }
.task.stacked { width: 54px; margin-right: 4px; box-shadow: 4px 0 0 -1px #808080, 4px 0 #a2a2a2; }
.task.active { background: #a9a9a9; border-color: #e4e4e4; }
.tray { display: flex; align-items: center; gap: 8px; margin-left: auto; color: #fff; }
.tray svg { width: 16px; height: 16px; }
.tray svg:first-child { width: 8px; height: 5px; margin-right: 5px; }
.ime { width: 18px; text-align: center; font-size: 14px; }
.tray svg:last-child { margin-left: 4px; }
.clock { width: 76px; margin: 0 8px 0 6px; padding-top: 2px; color: #fff; display: flex; flex-direction: column; justify-content: center; text-align: center; line-height: 18px; }
```
